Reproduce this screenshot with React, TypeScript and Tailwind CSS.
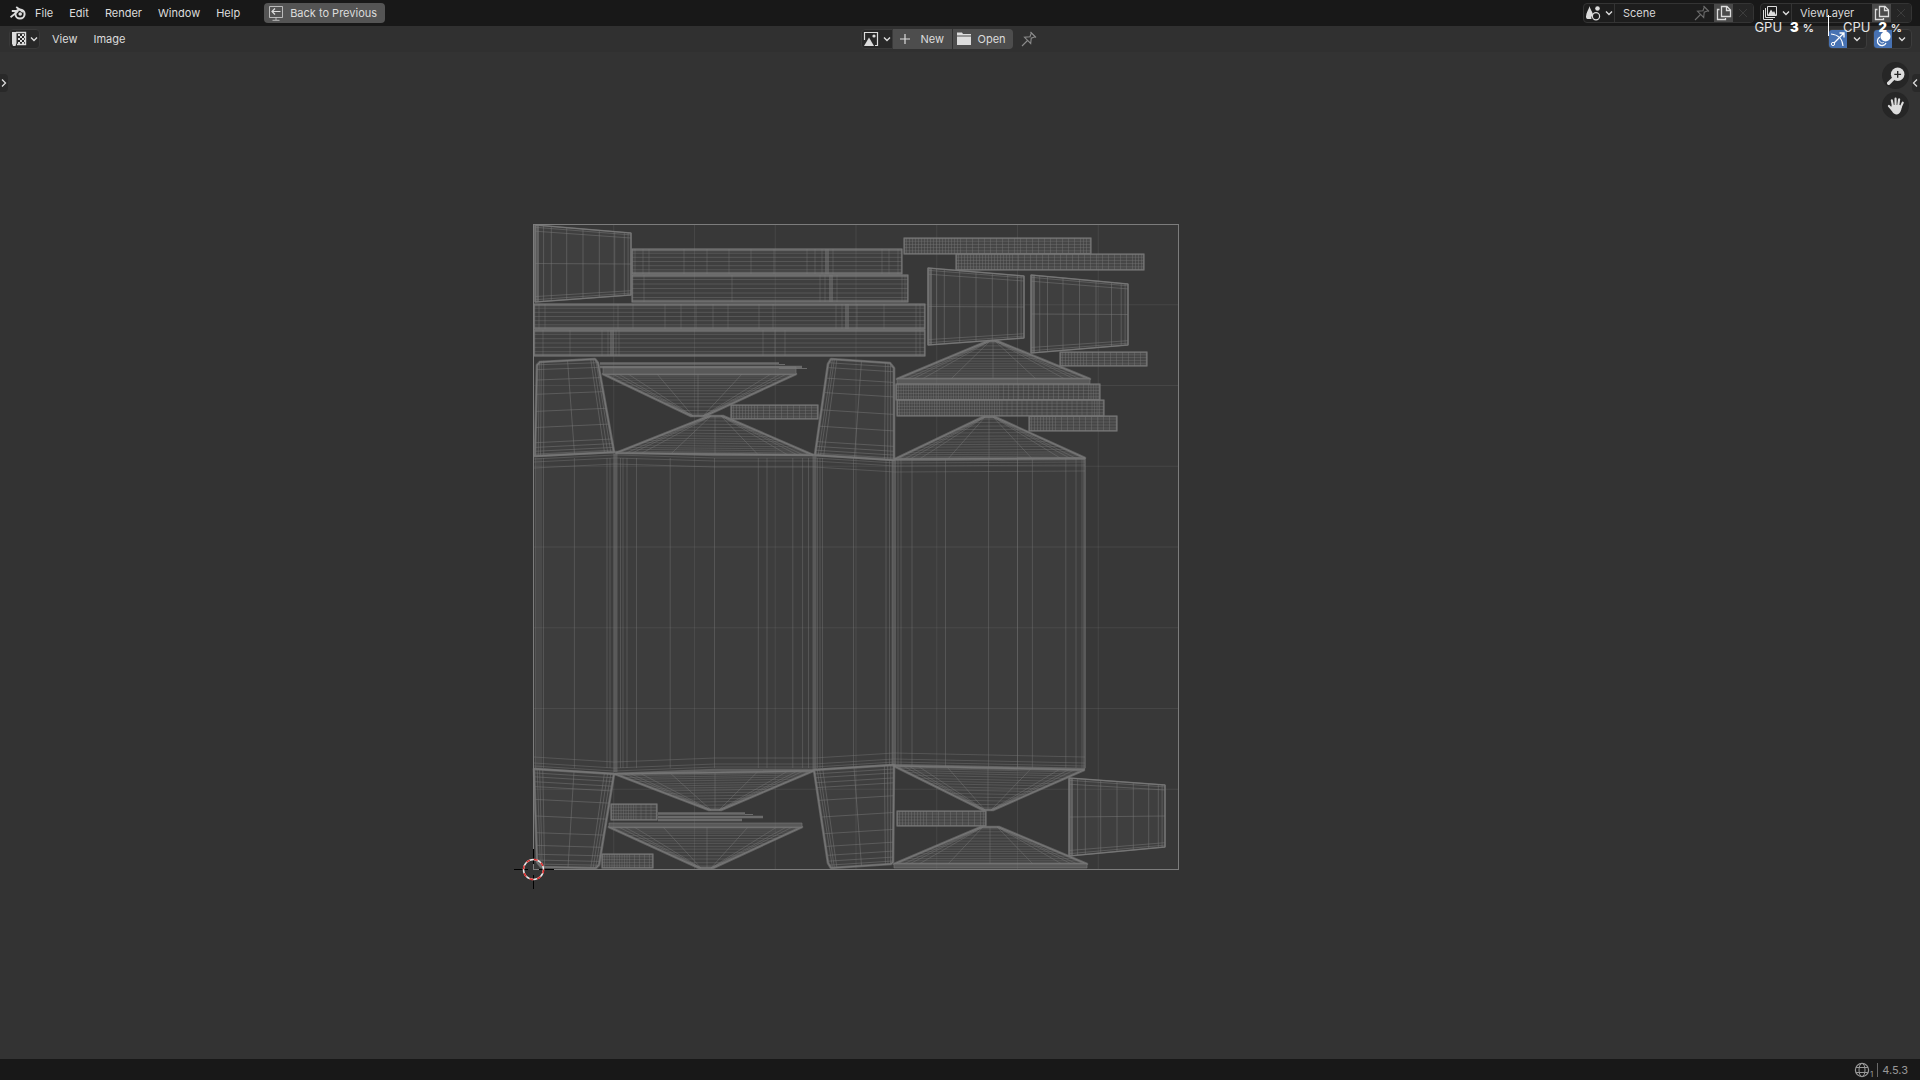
import type { ReactNode } from 'react';

type Point = [number, number];

const MENUS = ['File', 'Edit', 'Render', 'Window', 'Help'];

// ---------------------------------------------------------------------------
// Geometry helpers for the UV islands
// ---------------------------------------------------------------------------

const mix = (a: number, b: number, t: number) => a + (b - a) * t;
const mixPoint = (a: Point, b: Point, t: number): Point => [mix(a[0], b[0], t), mix(a[1], b[1], t)];
const seg = (a: Point, b: Point) => `M${a[0].toFixed(1)} ${a[1].toFixed(1)}L${b[0].toFixed(1)} ${b[1].toFixed(1)}`;
const poly = (points: Point[]) => points.map((p) => p.join(',')).join(' ');

interface StripProps {
  x: number;
  y: number;
  right: number;
  bottom: number;
  cuts: number[];
  rows?: number;
  thick?: number[];
}

/** Long rectangular island with hand placed vertical cuts */
function Strip({ x, y, right, bottom, cuts, rows = 5, thick = [] }: StripProps) {
  const h = bottom - y;
  const lines: string[] = [];
  cuts.forEach((c) => lines.push(seg([c, y], [c, bottom])));
  for (let i = 1; i <= rows; i++) {
    const ly = y + (h * i) / (rows + 1);
    lines.push(seg([x, ly], [right, ly]));
  }
  return (
    <g>
      <rect x={x} y={y} width={right - x} height={h} className="fill-[#3f3f3f]" />
      <path d={lines.join('')} strokeOpacity={0.42} />
      <path d={thick.map((c) => seg([c, y], [c, bottom])).join('')} strokeWidth={4} strokeOpacity={0.5} />
      <path d={seg([x, y + 1], [right, y + 1]) + seg([x, bottom - 1], [right, bottom - 1])} strokeWidth={2.6} strokeOpacity={0.65} />
      <path d={seg([x + 0.5, y], [x + 0.5, bottom]) + seg([right - 0.5, y], [right - 0.5, bottom])} strokeWidth={1.4} strokeOpacity={0.6} />
    </g>
  );
}

/** Small island with a tight mesh, closest at its left end */
function DenseStrip({ box, step = 6, tight = 0.3 }: { box: [number, number, number, number]; step?: number; tight?: number }) {
  const [x, y, right, bottom] = box;
  const lines: string[] = [];
  let cx = x + 2.5;
  while (cx < right - 2) {
    lines.push(seg([cx, y], [cx, bottom]));
    const t = (cx - x) / (right - x);
    cx += t < tight ? step / 2 : t > 0.93 ? step / 2 : step;
  }
  for (let i = 1; i < 5; i++) {
    const ly = mix(y, bottom, i / 5);
    lines.push(seg([x, ly], [right, ly]));
  }
  return (
    <g>
      <rect x={x} y={y} width={right - x} height={bottom - y} className="fill-[#464646]" />
      <path d={lines.join('')} strokeOpacity={0.42} />
      <rect x={x + 0.5} y={y + 0.5} width={right - x - 1} height={bottom - y - 1} fill="none" strokeWidth={1.4} strokeOpacity={0.6} />
    </g>
  );
}

interface FanProps {
  left: Point;
  right: Point;
  apex: [number, number, number];
  center: number;
  band?: number;
}

/** Triangular lid: horizontal rings between a base and a short flat apex */
function Fan({ left, right, apex, center, band = 0 }: FanProps) {
  const [ax, bx, ay] = apex;
  const rings = [0.05, 0.1, 0.15, 0.21, 0.28, 0.34, 0.4, 0.47, 0.54, 0.62, 0.7, 0.78, 0.87, 0.95];
  const lines = rings.map((t) => seg(mixPoint(left, [ax, ay], t), mixPoint(right, [bx, ay], t)));
  const rays: string[] = [seg(mixPoint(left, right, (center - left[0]) / (right[0] - left[0])), [center, ay])];
  [0.05, 0.08, 0.13, 0.28].forEach((t) => {
    rays.push(seg(mixPoint(left, right, t), [ax + 2, ay]));
    rays.push(seg(mixPoint(right, left, t), [bx - 2, ay]));
  });
  const outline: Point[] = [left, right, [bx, ay], [ax, ay]];
  return (
    <g strokeLinejoin="round">
      <polygon points={poly(outline)} className="fill-[#404040]" />
      <path d={lines.join('')} strokeOpacity={0.4} />
      <path d={rays.join('')} strokeOpacity={0.45} />
      <polygon points={poly(outline)} fill="none" strokeWidth={2.6} strokeOpacity={0.65} />
      {band !== 0 && (
        <polygon
          points={poly([left, right, [right[0], right[1] + band], [left[0], left[1] + band]])}
          className="fill-[#595959]"
          strokeOpacity={0.6}
        />
      )}
    </g>
  );
}

interface MeshProps {
  corners: [Point, Point, Point, Point];
  us: number[];
  vs: number[];
  outline?: Point[];
}

/** Four sided patch (top left, top right, bottom right, bottom left) */
function Mesh({ corners, us, vs, outline }: MeshProps) {
  const [tl, tr, br, bl] = corners;
  const lines = [
    ...us.map((u) => seg(mixPoint(tl, tr, u), mixPoint(bl, br, u))),
    ...vs.map((v) => seg(mixPoint(tl, bl, v), mixPoint(tr, br, v))),
  ];
  const shape = poly(outline ?? corners);
  return (
    <g strokeLinejoin="round">
      <polygon points={shape} className="fill-[#3f3f3f]" />
      <path d={lines.join('')} strokeOpacity={0.5} />
      <polygon points={shape} fill="none" strokeWidth={outline ? 2.6 : 1.6} strokeOpacity={0.65} />
    </g>
  );
}

// Side caps share the same loop cuts
const CAP_US = [0.03, 0.09, 0.17, 0.33, 0.5, 0.67, 0.83, 0.93, 0.97];
const CAP_VS = [0.03, 0.08, 0.5, 0.93, 0.97];

const CAPS: [Point, Point, Point, Point][] = [
  [[535, 225], [631, 233], [631, 295], [535, 302]],
  [[928, 268], [1024, 276], [1024, 338], [928, 345]],
  [[1031, 275], [1128, 284], [1128, 345], [1031, 353]],
  [[1069, 778], [1165, 785], [1165, 847], [1069, 856]],
];

const WING_US = [0.04, 0.07, 0.11, 0.5, 0.88, 0.92, 0.96];
const TOP_WING_VS = [0.04, 0.09, 0.2, 0.35, 0.53, 0.7, 0.86, 0.91, 0.95, 0.98];
const BOTTOM_WING_VS = [0.04, 0.08, 0.13, 0.18, 0.31, 0.48, 0.65, 0.78, 0.87, 0.93, 0.97];

const DENSE: [number, number, number, number][] = [
  [904, 238, 1091, 254],
  [956, 254, 1144, 270],
  [1060, 352, 1147, 366],
  [1029, 416, 1117, 431],
  [731, 405, 818, 419],
  [897, 811, 986, 826],
];

const TIGHT: [number, number, number, number][] = [
  [896, 384, 1100, 400],
  [897, 400, 1104, 416],
  [611, 804, 657, 820],
  [602, 854, 653, 868],
];

// Vertical loops running through the four body panels
const BODY_LOOPS = [
  535.5, 537, 539, 541, 543.5, 574.4, 607, 610, 620.5, 623, 627, 636.5, 670.2, 714.5, 758.3, 767, 792.8, 802.6, 808.5, 817.5,
  820, 822.5, 853.5, 886, 889.5, 892, 898, 901, 912, 945.5, 988.6, 1017.5, 1032.4, 1065.8, 1076, 1082, 1084, 1085.5,
];

const BODY_TOP: Point[] = [[534, 456], [574, 454], [615, 452], [715, 455], [814, 455], [895, 460], [1085, 459]];
const BODY_BOTTOM: Point[] = [[534, 769], [614, 774], [715, 770], [814, 770], [894, 765], [1085, 769]];

const bend = (points: Point[], dy: number) => 'M' + points.map(([x, y]) => `${x} ${y + dy}`).join('L');

function Body() {
  const shape: Point[] = [...BODY_TOP, ...[...BODY_BOTTOM].reverse()];
  return (
    <g>
      <polygon points={poly(shape)} className="fill-[#3d3d3d]" stroke="none" />
      <path d={BODY_LOOPS.map((x) => seg([x, 458], [x, 768])).join('')} strokeOpacity={0.42} />
      <path d="M615.5 454V772M814.5 456V770M894 460V766" strokeWidth={4} strokeOpacity={0.5} />
      <path d="M1084.5 458V769" strokeWidth={2} strokeOpacity={0.4} />
      {[3, 6, 12].map((dy) => (
        <path key={dy} d={bend(BODY_TOP, dy)} fill="none" strokeOpacity={0.42} />
      ))}
      {[-3, -6, -12].map((dy) => (
        <path key={dy} d={bend(BODY_BOTTOM, dy)} fill="none" strokeOpacity={0.42} />
      ))}
      <path d={bend(BODY_TOP, 0)} fill="none" strokeWidth={2.4} strokeOpacity={0.6} />
      <path d={bend(BODY_BOTTOM, 0)} fill="none" strokeWidth={2.4} strokeOpacity={0.6} />
    </g>
  );
}

function UVLayout() {
  const grid = [1, 2, 3, 4, 5, 6, 7].map((i) => i * 80.75);
  return (
    <svg viewBox="0 52 1920 1007" className="block h-full w-full" role="img" aria-label="UV layout">
      <rect x="533.5" y="224.5" width="645" height="645" className="fill-[#383838]" />
      <g stroke="#787878" strokeWidth={1}>
        <Body />
        {CAPS.map((corners) => (
          <g key={corners[0].join()}>
            <Mesh corners={corners} us={CAP_US} vs={CAP_VS} />
            <path
              d={seg([corners[0][0] + 2, corners[0][1]], [corners[3][0] + 2, corners[3][1]])}
              strokeWidth={4}
              strokeOpacity={0.5}
            />
          </g>
        ))}

        <Strip
          x={632} y={249} right={902} bottom={274}
          cuts={[635, 643, 649, 684, 707, 729, 751, 774, 807, 815, 822, 833, 882, 889, 898]}
          thick={[827]}
        />
        <Strip x={632} y={275} right={908} bottom={302} cuts={[644, 732, 820, 825, 837, 902, 905]} thick={[831]} />
        <Strip
          x={534} y={304} right={925} bottom={329}
          cuts={[539, 545, 618, 633, 665, 681, 696, 713, 728, 759, 773, 836, 842, 857, 884, 916, 920]}
          thick={[847]}
        />
        <Strip
          x={534} y={330} right={925} bottom={356}
          cuts={[543, 570, 602, 608, 616, 619, 763, 775, 785, 916, 920]}
          thick={[612]}
        />

        <Mesh
          corners={[[537, 361], [598, 359], [614, 452], [535, 456]]}
          outline={[[537, 365], [540, 362], [595, 359], [598, 363], [614, 452], [535, 456]]}
          us={WING_US}
          vs={TOP_WING_VS}
        />
        <Mesh
          corners={[[830, 359], [893, 363], [894, 460], [815, 455]]}
          outline={[[828, 364], [831, 359], [890, 363], [894, 368], [894, 460], [815, 455]]}
          us={WING_US}
          vs={TOP_WING_VS}
        />
        <Mesh
          corners={[[534, 769], [614, 774], [598, 868], [538, 867]]}
          outline={[[534, 769], [614, 774], [599, 865], [596, 868], [541, 867], [537, 862]]}
          us={WING_US}
          vs={BOTTOM_WING_VS}
        />
        <Mesh
          corners={[[814, 770], [894, 765], [893, 864], [830, 868]]}
          outline={[[814, 770], [894, 765], [893, 862], [891, 864], [831, 868], [828, 863]]}
          us={WING_US}
          vs={BOTTOM_WING_VS}
        />

        <Fan left={[603, 374]} right={[796, 374]} apex={[691, 705, 416]} center={698} band={-7} />
        <Fan left={[616, 453]} right={[813, 455]} apex={[709, 723, 416]} center={715} />
        <Fan left={[897, 379]} right={[1090, 379]} apex={[988, 997, 341]} center={993} band={5} />
        <Fan left={[895, 459]} right={[1085, 458]} apex={[983, 995, 417]} center={989} />
        <Fan left={[615, 774]} right={[813, 771]} apex={[709, 721, 810]} center={715} />
        <Fan left={[609, 827]} right={[802, 827]} apex={[699, 713, 868]} center={707} band={-4} />
        <Fan left={[894, 766]} right={[1084, 770]} apex={[983, 993, 810]} center={988} />
        <Fan left={[894, 864]} right={[1087, 864]} apex={[981, 999, 827]} center={990} band={4} />

        {DENSE.map((box) => (
          <DenseStrip key={box.join()} box={box} />
        ))}
        {TIGHT.map((box) => (
          <DenseStrip key={box.join()} box={box} step={5} tight={0.5} />
        ))}

        {/* slivers beside the lids */}
        <path d="M600 363.5H779M600 367H802M658 813.5H745M658 817H763M658 820H742" strokeWidth={2.4} strokeOpacity={0.8} />
        <path d="M779 364.5H785M779 368.5H807M745 814.5H753" strokeOpacity={0.8} />
      </g>

      <path
        d={grid.map((g) => `M${533 + g} 224V870M533 ${224 + g}H1179`).join('')}
        stroke="#808080"
        strokeOpacity={0.2}
      />
      <rect x="533.5" y="224.5" width="645" height="645" fill="none" stroke="#7c7c7c" />

      {/* 2D cursor */}
      <path d="M514 869.5H528M539 869.5H554M533.5 849V864M533.5 875V889" stroke="#000" />
      <circle cx="533.5" cy="869.5" r="10" fill="none" stroke="#e8e8e8" strokeWidth={1.5} />
      <circle cx="533.5" cy="869.5" r="10" fill="none" stroke="#e02b2b" strokeWidth={1.5} strokeDasharray="3.93 3.93" />
    </svg>
  );
}

// ---------------------------------------------------------------------------
// Icons
// ---------------------------------------------------------------------------

function Icon({ children, className = 'size-4' }: { children: ReactNode; className?: string }) {
  return (
    <svg viewBox="0 0 16 16" fill="none" stroke="currentColor" className={`shrink-0 ${className}`} aria-hidden="true">
      {children}
    </svg>
  );
}

const ChevronDown = () => (
  <svg viewBox="0 0 8 16" fill="none" stroke="currentColor" className="h-4 w-2 shrink-0" aria-hidden="true">
    <path d="M1 6.5 4 9.5 7 6.5" strokeWidth={1.4} />
  </svg>
);

const ChevronSide = ({ d }: { d: string }) => (
  <svg viewBox="0 0 8 16" fill="none" stroke="currentColor" className="h-4 w-2 shrink-0" aria-hidden="true">
    <path d={d} strokeWidth={1.3} />
  </svg>
);

const BlenderLogo = () => (
  <Icon>
    <circle cx="10" cy="9" r="4.6" strokeWidth={2} />
    <circle cx="10.2" cy="9" r="1.8" fill="currentColor" stroke="none" />
    <path d="M.5 12.2 7.5 6.6M1.8 6H8.5M6.2 2 13 7" strokeWidth={1.8} />
  </Icon>
);

const BackIcon = () => (
  <Icon>
    <path d="M1.5 1.5H14.5V12.5H1.5ZM8 12.5V15M4.5 15.3H11.5" strokeOpacity={0.75} />
    <path d="M12.5 6.5H4M7 3.5 4 6.5 7 9.5" strokeWidth={1.2} />
  </Icon>
);

const UVEditorIcon = () => (
  <Icon>
    <path d="M1 1H5.5V12L4.5 15H2L1 12.5Z" fill="currentColor" stroke="none" />
    <path d="M5 1.5H14.5V13.5H6" strokeWidth={1.4} />
    <path
      d="M7 3h2v2h-2zM11 3h2v2h-2zM9 5h2v2h-2zM7 7h2v2h-2zM11 7h2v2h-2zM9 9h2v2h-2zM13 5h1v2h-1zM13 9h1v2h-1zM7 11h2v2h-2zM11 11h2v2h-2z"
      fill="currentColor"
      stroke="none"
    />
  </Icon>
);

const ImageIcon = () => (
  <Icon>
    <path d="M1.5 9V1.5H14.5V14.5H12" strokeWidth={1.2} />
    <path d="M1 15 6 6.5 11 15Z" fill="currentColor" stroke="none" />
    <circle cx="11" cy="5" r="1.6" fill="currentColor" stroke="none" />
  </Icon>
);

const PlusIcon = () => (
  <Icon>
    <path d="M8 3V13M3 8H13" strokeWidth={1.2} />
  </Icon>
);

const FolderIcon = () => (
  <Icon>
    <path d="M1 1.5H6L7 3H15V4.6H1ZM1 5.5H15V14H1Z" fill="currentColor" stroke="none" />
  </Icon>
);

const PinIcon = () => (
  <Icon>
    <path d="M9.5 1 15 6.5M10.3 2 9 5.8 3.5 6.3 9.7 12.5 10.2 7.2 14 5.8M6.5 9.5 1 15" strokeWidth={1.1} />
  </Icon>
);

const CopyIcon = () => (
  <Icon>
    <path d="M5.5 1.5H11L14.5 5V11.5H5.5ZM10.5 1.5V5.5H14.5" strokeWidth={1.3} />
    <path d="M3.5 4.5H1.5V14.5H9.5V13" strokeWidth={1.3} />
  </Icon>
);

const CloseIcon = () => (
  <Icon>
    <path d="M4 4 12 12M12 4 4 12" />
  </Icon>
);

const SceneIcon = () => (
  <Icon>
    <path d="M4.5 1C5 4 8 7.5 8 10C6.5 10.5 6 12.5 6.5 14H2.5C1.5 14 1 13 1 11.5C1 8 4 4 4.5 1Z" fill="currentColor" stroke="none" />
    <circle cx="12.5" cy="3.5" r="2.3" fill="currentColor" stroke="none" />
    <circle cx="11" cy="11.3" r="3.6" strokeWidth={1.2} />
  </Icon>
);

const LayersIcon = () => (
  <Icon>
    <path d="M5.5 1.5H14.5V10.5H5.5ZM3.5 3V12.5H13M1.5 5V14.5H11" />
    <path d="M6 10 9 4.5 11 7.5 12 6 14 10Z" fill="currentColor" stroke="none" />
  </Icon>
);

const GizmoIcon = () => (
  <Icon>
    <path d="M1 3C8 3.5 12.5 8 13 15" strokeWidth={1.2} />
    <path d="M4 12 13.5 2.5M9.5 2H14V6.5" strokeWidth={1.3} />
    <circle cx="3" cy="13" r="1.6" />
  </Icon>
);

const OverlayIcon = () => (
  <Icon>
    <circle cx="10.5" cy="5.5" r="5" fill="currentColor" stroke="none" />
    <path d="M5 6A4.5 4.5 0 1 0 11 12" strokeWidth={1.3} />
    <path d="M4.5 9.5C5 12 8 12.5 9 11" />
  </Icon>
);

const ZoomIcon = () => (
  <Icon className="size-[18px]">
    <path d="M1.5 14.5 5 11" strokeWidth={3} strokeLinecap="round" />
    <circle cx="9.5" cy="6.5" r="6" fill="currentColor" stroke="none" />
    <path d="M9.5 3.5V9.5M6.5 6.5H12.5" stroke="#262626" strokeWidth={1.2} />
  </Icon>
);

const HandIcon = () => (
  <Icon className="size-[18px]">
    <path d="M5.3 8 4.3 3M7.6 7.5V1.5M10 7.5 10.8 2M12.2 9 14 5M5 11.5 1.7 8" strokeWidth={1.9} strokeLinecap="round" />
    <path d="M4.4 7H11.5L13.2 8.5C12.8 12 11.5 15.5 8.5 15.5C5.5 15.5 4.5 12.5 3 10.5Z" fill="currentColor" stroke="none" />
  </Icon>
);

const GlobeIcon = () => (
  <Icon>
    <circle cx="8" cy="8" r="6.6" strokeWidth={1.2} />
    <ellipse cx="8" cy="8" rx="3" ry="6.6" />
    <path d="M2 5.5H14M2 10.5H14" />
  </Icon>
);

// ---------------------------------------------------------------------------
// Window regions
// ---------------------------------------------------------------------------

interface DataBlockProps {
  label: string;
  value: string;
  icon: ReactNode;
  pinned?: boolean;
  fieldClass: string;
}

function DataBlock({ label, value, icon, pinned, fieldClass }: DataBlockProps) {
  return (
    <div className="flex h-5 items-stretch overflow-hidden rounded border border-[#343434] bg-[#1d1d1d]">
      <button type="button" aria-label={`Browse ${label}`} className="flex w-[31px] items-center justify-center gap-1 border-r border-[#343434]">
        {icon}
        <ChevronDown />
      </button>
      <div className={`flex items-center ${fieldClass}`}>
        <input type="text" aria-label={label} defaultValue={value} className="w-full min-w-0 bg-transparent pl-2 text-[#d8d8d8] outline-none" />
        {pinned && (
          <span className="mr-1 text-[#6c6c6c]">
            <PinIcon />
          </span>
        )}
      </div>
      <button type="button" aria-label={`New ${label}`} className="flex w-[19px] items-center justify-center bg-[#4a4a4a]">
        <CopyIcon />
      </button>
      <button type="button" aria-label={`Remove ${label}`} className="flex w-5 items-center justify-center bg-[#252525] text-[#3c3c3c]">
        <CloseIcon />
      </button>
    </div>
  );
}

function TopBar() {
  return (
    <header className="flex h-[26px] shrink-0 items-start justify-between bg-[#181818] pt-[3px] pr-2 pl-[10px]">
      <nav className="flex h-5 items-center">
        <button type="button" aria-label="Blender" className="mr-[9px]">
          <BlenderLogo />
        </button>
        <div className="flex gap-4">
          {MENUS.map((menu) => (
            <button key={menu} type="button">
              {menu}
            </button>
          ))}
        </div>
        <button type="button" className="ml-6 flex h-5 items-center gap-1.5 rounded bg-[#545454] pr-2 pl-1">
          <BackIcon />
          Back to Previous
        </button>
      </nav>
      <div className="flex gap-1.5">
        <DataBlock label="Scene" value="Scene" icon={<SceneIcon />} pinned fieldClass="w-[99px]" />
        <DataBlock label="View Layer" value="ViewLayer" icon={<LayersIcon />} fieldClass="w-20" />
      </div>
    </header>
  );
}

function ToggleGroup({ label, icon }: { label: string; icon: ReactNode }) {
  return (
    <div className="flex h-5 overflow-hidden rounded border border-[#3c3c3c] bg-[#282828]">
      <button type="button" aria-label={label} aria-pressed="true" className="flex w-[18px] items-center justify-center bg-[#4772b3] text-white">
        {icon}
      </button>
      <button type="button" aria-label={`${label} options`} className="flex w-[19px] items-center justify-center">
        <ChevronDown />
      </button>
    </div>
  );
}

function EditorHeader() {
  return (
    <div className="flex h-[26px] shrink-0 items-center bg-[#303030] pr-2 pl-[9px]">
      <div className="flex flex-1 items-center">
        <button type="button" aria-label="Editor type" className="mr-3 flex h-5 w-[31px] items-center justify-center gap-[3px] rounded border border-[#3a3a3a] bg-[#282828]">
          <UVEditorIcon />
          <ChevronDown />
        </button>
        <div className="flex gap-4">
          <button type="button">View</button>
          <button type="button">Image</button>
        </div>
      </div>
      <div className="mr-6 flex h-5 items-stretch">
        <button type="button" aria-label="Browse image" className="flex w-8 items-center justify-center gap-1 rounded-l border border-[#3a3a3a] bg-[#282828]">
          <ImageIcon />
          <ChevronDown />
        </button>
        <button type="button" className="flex w-[59px] items-center gap-2 bg-[#4d4d4d] pl-1">
          <PlusIcon />
          New
        </button>
        <button type="button" className="ml-px flex w-[60px] items-center gap-1.5 rounded-r bg-[#4d4d4d] pl-[3px]">
          <FolderIcon />
          Open
        </button>
        <button type="button" aria-label="Pin" className="ml-2 text-[#8c8c8c]">
          <PinIcon />
        </button>
      </div>
      <div className="flex flex-1 items-center justify-end gap-1.5">
        <ToggleGroup label="Gizmos" icon={<GizmoIcon />} />
        <ToggleGroup label="Overlays" icon={<OverlayIcon />} />
      </div>
    </div>
  );
}

function Meter({ name, value }: { name: string; value: number }) {
  return (
    <span className="flex items-baseline">
      <span className="mr-2 text-[13px]">{name}</span>
      <span className="mr-1 text-[13px] font-black text-white">{value}</span>
      <span className="text-[11px] font-bold">%</span>
    </span>
  );
}

/** System load readout floating above the window */
function PerformanceOverlay() {
  return (
    <div className="pointer-events-none absolute top-[15px] right-[18px] flex h-[21px] items-end text-[#e6e6e6]">
      <Meter name="GPU" value={3} />
      <span className="mx-3.5 h-full w-px bg-white" />
      <Meter name="CPU" value={2} />
    </div>
  );
}

export default function App() {
  return (
    <div className="relative flex h-screen flex-col overflow-hidden bg-[#333333] font-['Inter',sans-serif] text-[11px] leading-4 text-[#dcdcdc]">
      <TopBar />
      <EditorHeader />
      <main className="relative min-h-0 flex-1">
        <UVLayout />
        <button type="button" aria-label="Show toolbar" className="absolute top-[22px] left-0 flex h-[18px] w-2 items-center justify-center rounded-r bg-[#292929]">
          <ChevronSide d="M2 4.5 5.5 8 2 11.5" />
        </button>
        <button type="button" aria-label="Show sidebar" className="absolute top-[22px] right-0 flex h-[18px] w-2 items-center justify-center rounded-l bg-[#292929]">
          <ChevronSide d="M5 4.5 1.5 8 5 11.5" />
        </button>
        <div className="absolute top-2.5 right-[11px] flex flex-col gap-[3px]">
          <button type="button" aria-label="Zoom" className="flex size-[27px] items-center justify-center rounded-full bg-[#262626]">
            <ZoomIcon />
          </button>
          <button type="button" aria-label="Pan" className="flex size-[27px] items-center justify-center rounded-full bg-[#262626]">
            <HandIcon />
          </button>
        </div>
      </main>
      <footer className="flex h-[21px] shrink-0 items-center justify-end gap-1 bg-[#181818] pr-3 text-[#989898]">
        <span className="flex items-end">
          <GlobeIcon />
          <span className="text-[8px] leading-2">1</span>
        </span>
        <span className="h-3.5 w-px bg-[#6a6a6a]" />
        <span>4.5.3</span>
      </footer>
      <PerformanceOverlay />
    </div>
  );
}
